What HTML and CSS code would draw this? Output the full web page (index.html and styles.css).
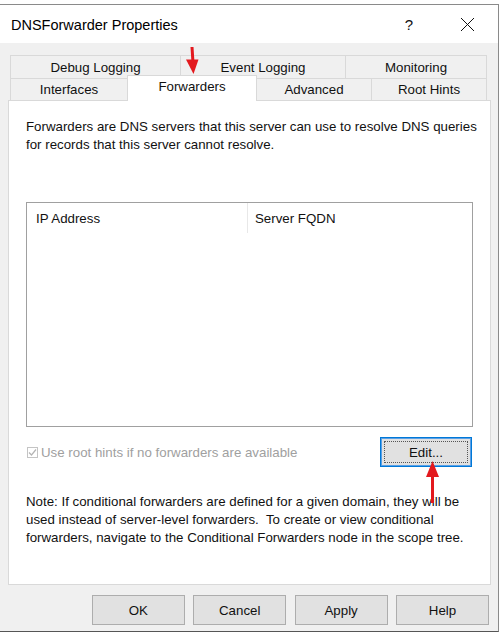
FILE: index.html
```html
<!DOCTYPE html>
<html>
<head>
<meta charset="utf-8">
<link rel="stylesheet" href="styles.css">
</head>
<body>
<div class="dialog">
  <div class="titlebar">
    <span class="title">DNSForwarder Properties</span>
    <span class="help">?</span>
    <svg class="close" width="15" height="15" viewBox="0 0 15 15"><path d="M1 1 L14 14 M14 1 L1 14" stroke="#111" stroke-width="1" fill="none"/></svg>
  </div>
  <div class="content">
    <div class="tabs">
      <div class="tabrow upper">
        <div class="tab t-debug">Debug Logging</div>
        <div class="tab t-event">Event Logging</div>
        <div class="tab t-mon last">Monitoring</div>
      </div>
      <div class="tabrow lower">
        <div class="tab t-int">Interfaces</div>
        <div class="tab t-fwd selected">Forwarders</div>
        <div class="tab t-adv">Advanced</div>
        <div class="tab t-root last">Root Hints</div>
      </div>
    </div>
    <div class="panel">
      <p class="intro">Forwarders are DNS servers that this server can use to resolve DNS queries for records that this server cannot resolve.</p>
      <div class="listbox">
        <div class="listhead">
          <div class="col c1">IP Address</div>
          <div class="col c2">Server FQDN</div>
        </div>
      </div>
      <div class="optrow">
        <label class="check">
          <span class="box"><svg width="9" height="9" viewBox="0 0 9 9"><path d="M1 4.5 L3.5 7 L8 1.5" stroke="#b4b4b4" stroke-width="1.2" fill="none"/></svg></span>
          <span class="checklabel">Use root hints if no forwarders are available</span>
        </label>
        <button class="btn edit"><span class="focus">Edit...</span></button>
      </div>
      <p class="note">Note: If conditional forwarders are defined for a given domain, they will be used instead of server-level forwarders.&nbsp; To create or view conditional forwarders, navigate to the Conditional Forwarders node in the scope tree.</p>
    </div>
    <div class="actions">
      <button class="btn">OK</button>
      <button class="btn">Cancel</button>
      <button class="btn">Apply</button>
      <button class="btn">Help</button>
    </div>
  </div>
</div>
<svg class="arrow arrow-down" width="20" height="32" viewBox="0 0 20 32"><path d="M6.5 0 L9.5 0 L10.4 14 L7.4 14 Z" fill="#e3191e"/><path d="M2 12.5 L14.5 12.5 L9.5 27 Z" fill="#e3191e"/></svg>
<svg class="arrow arrow-up" width="20" height="48" viewBox="0 0 20 48"><path d="M6.5 0 L13 16 L0 16 Z" fill="#e3191e"/><path d="M5 15 L8 15 L8 42 L5 42 Z" fill="#e3191e"/></svg>
</body>
</html>
```
FILE: styles.css
```css
html, body {
  margin: 0;
  padding: 0;
  background: #ffffff;
}
body {
  position: relative;
  width: 501px;
  height: 634px;
  overflow: hidden;
  font-family: "Liberation Sans", Arial, sans-serif;
  font-size: 13.3px;
  color: #111;
}
.dialog {
  box-sizing: border-box;
  margin-top: 4px;
  width: 499px;
  height: 628px;
  border-top: 1px solid #8a8a8a;
  border-right: 1px solid #8a8a8a;
  border-bottom: 1px solid #555;
  display: flex;
  flex-direction: column;
}
.titlebar {
  height: 38px;
  flex: none;
  background: #fff;
  display: flex;
  align-items: center;
  padding-left: 11px;
}
.title {
  font-size: 14.5px;
  color: #000;
  flex: 1;
  padding-top: 1px;
}
.help {
  font-size: 15px;
  margin-right: 47px;
  color: #111;
}
.close {
  margin-right: 23px;
}
.content {
  flex: 1;
  background: #f0f0f0;
  padding-top: 12px;
  display: flex;
  flex-direction: column;
}
.tabs {
  margin-left: 10px;
  width: 477px;
}
.tabrow {
  display: flex;
  align-items: flex-end;
}
.tab {
  box-sizing: border-box;
  border-top: 1px solid #d9d9d9;
  border-left: 1px solid #d9d9d9;
  text-align: center;
  background: #f0f0f0;
  white-space: nowrap;
}
.tab.last {
  border-right: 1px solid #d9d9d9;
}
.upper .tab {
  height: 23px;
  line-height: 24px;
}
.lower .tab {
  height: 22px;
  line-height: 22px;
}
.t-debug { width: 170px; }
.t-event { width: 165px; }
.t-mon { width: 142px; }
.t-int { width: 117px; }
.t-fwd { width: 129px; }
.t-adv { width: 115px; }
.t-root { width: 116px; }
.lower .tab.selected {
  position: relative;
  z-index: 2;
  height: 26px;
  margin-top: -3px;
  margin-bottom: -1px;
  line-height: 22px;
  background: #fff;
  border-right: 1px solid #d9d9d9;
  width: 130px;
}
.lower .tab.selected + .tab {
  border-left: none;
  width: 114px;
}
.panel {
  box-sizing: border-box;
  margin-left: 8px;
  width: 483px;
  height: 485px;
  background: #fff;
  border: 1px solid #d9d9d9;
  padding: 17px 17px 0 17px;
}
.intro, .note {
  margin: 0;
  line-height: 18px;
  width: 452px;
}
.listbox {
  box-sizing: border-box;
  margin-top: 48px;
  width: 447px;
  height: 225px;
  border: 1px solid #a0a0a0;
}
.listhead {
  display: flex;
  height: 30px;
  align-items: stretch;
}
.col {
  box-sizing: border-box;
  display: flex;
  align-items: center;
}
.c1 {
  width: 221px;
  padding-left: 9px;
  border-right: 1px solid #e8e8e8;
}
.c2 {
  padding-left: 7px;
}
.optrow {
  width: 446px;
  margin-top: 10px;
  display: flex;
  align-items: center;
  justify-content: space-between;
}
.check {
  display: flex;
  align-items: center;
  color: #a0a0a0;
}
.box {
  box-sizing: border-box;
  width: 11px;
  height: 11px;
  margin-left: 1px;
  margin-right: 3px;
  border: 1px solid #c4c4c4;
  display: flex;
  align-items: center;
  justify-content: center;
}
.btn {
  box-sizing: border-box;
  width: 93px;
  height: 30px;
  padding: 0;
  margin: 0;
  background: #e1e1e1;
  border: 1px solid #adadad;
  font-family: "Liberation Sans", Arial, sans-serif;
  font-size: 13.3px;
  color: #111;
}
.btn.edit {
  width: 92px;
  border: 1px solid #0078d7;
  box-shadow: inset 0 0 0 1px #5aa0e6;
  padding: 3px;
  display: flex;
}
.focus {
  flex: 1;
  border: 1px dotted #555;
  display: flex;
  align-items: center;
  justify-content: center;
}
.note {
  margin-top: 26px;
}
.actions {
  display: flex;
  justify-content: flex-end;
  column-gap: 8.4px;
  margin-top: 10px;
  padding-right: 9px;
}
.arrow {
  position: absolute;
}
.arrow-down {
  left: 184px;
  top: 47px;
}
.arrow-up {
  left: 426px;
  top: 461px;
}
```
